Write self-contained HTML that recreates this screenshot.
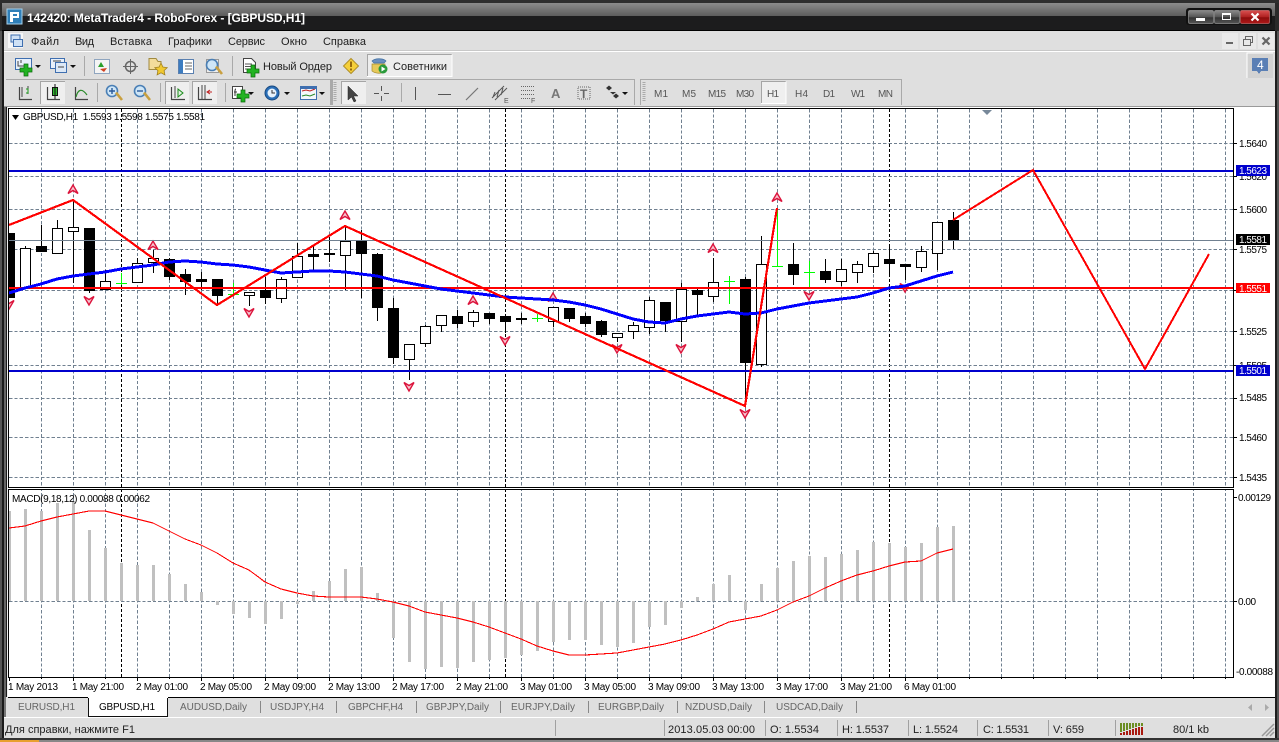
<!DOCTYPE html>
<html><head><meta charset="utf-8"><title>MetaTrader4</title>
<style>
html,body{margin:0;padding:0;background:#2a2a2a;width:1279px;height:742px;overflow:hidden}
svg{display:block}
text{font-family:"Liberation Sans",sans-serif;font-size:10px;fill:#000;white-space:pre}
.m{font-size:11px;fill:#1c1c1c}
.tb{font-size:11px;fill:#222}
.tf{font-size:10px;fill:#555}
.tab{font-size:10px;fill:#666}
.st{font-size:11px;fill:#222}
.ax{font-size:10px;fill:#000}
.c{shape-rendering:crispEdges}
</style></head><body>
<svg width="1279" height="742" viewBox="0 0 1279 742" xmlns="http://www.w3.org/2000/svg">
<defs>
<linearGradient id="tg" x1="0" y1="0" x2="0" y2="1"><stop offset="0" stop-color="#8c8c8c"/><stop offset="1" stop-color="#5c5c5c"/></linearGradient>
<linearGradient id="bg" x1="0" y1="0" x2="0" y2="1"><stop offset="0" stop-color="#8a8a8a"/><stop offset=".5" stop-color="#555"/><stop offset=".55" stop-color="#333"/><stop offset="1" stop-color="#555"/></linearGradient>
<linearGradient id="rg" x1="0" y1="0" x2="0" y2="1"><stop offset="0" stop-color="#d85050"/><stop offset=".5" stop-color="#b02020"/><stop offset=".55" stop-color="#8c0c0c"/><stop offset="1" stop-color="#b01818"/></linearGradient>
<clipPath id="cm"><rect x="9" y="109" width="1224" height="378"/></clipPath>
<clipPath id="cd"><rect x="9" y="490" width="1224" height="187"/></clipPath>
<g id="up"><path d="M-5 4.500L0-4 5 4.500 0 1.500Z" fill="#f6c4cf" stroke="#dc143c" stroke-width="1.400"/></g>
<g id="dn"><path d="M-5-4.500L0 4 5-4.500 0-1.500Z" fill="#f6c4cf" stroke="#dc143c" stroke-width="1.400"/></g>
<g id="plus"><path d="M-2-6h4v4h4v4h-4v4h-4v-4h-4v-4h4z" fill="#22b322" stroke="#0b6b0b" stroke-width=".7"/></g>
<path id="dd" d="M0 0h6l-3 3z" fill="#111"/>
<g id="mag"><circle cx="-2" cy="-2" r="5.500" fill="#cfe6f7" stroke="#4a7fb5" stroke-width="1.600"/><path d="M2-.5L8 7" stroke="#c9a040" stroke-width="2.600"/></g>
</defs>

<!-- window frame -->
<rect width="1279" height="742" fill="#2a2a2a"/>
<rect x="0" y="0" width="1279" height="3" fill="#2e2e2e"/>
<rect x="2" y="3" width="1273" height="13" fill="url(#tg)"/>
<rect x="2" y="16" width="1273" height="15" fill="#1c1c1d"/>
<rect x="2" y="30" width="1273" height="1" fill="#000"/>

<!-- title icon -->
<g class="c"><rect x="7" y="9" width="15" height="15" fill="#2f7fb8"/><rect x="7" y="9" width="15" height="15" fill="none" stroke="#a7d2ec"/><path d="M10 12h9v6h-6v4h-3zM13 14v2h4v-2z" fill="#fff" fill-rule="evenodd"/></g>
<text x="27" y="22" textLength="278" style="font-size:12px;font-weight:bold;fill:#fff">142420: MetaTrader4 - RoboForex - [GBPUSD,H1]</text>

<!-- window buttons -->
<rect x="1186" y="8" width="86" height="17" rx="3" fill="#111"/>
<rect x="1188.500" y="10.500" width="25" height="13" rx="1.500" fill="url(#bg)" stroke="#bbb" stroke-opacity=".5"/>
<rect x="1214.500" y="10.500" width="25" height="13" rx="1.500" fill="url(#bg)" stroke="#bbb" stroke-opacity=".5"/>
<rect x="1240.500" y="10.500" width="29" height="13" rx="1.500" fill="url(#rg)" stroke="#e88" stroke-opacity=".5"/>
<g class="c"><rect x="1196" y="18" width="9" height="3" fill="#fff"/><rect x="1222.500" y="13.500" width="8" height="6" fill="none" stroke="#fff" stroke-width="1.200"/><rect x="1222" y="13" width="9" height="2" fill="#fff"/></g>
<path d="M1251.500 13.500L1258.500 20.500M1258.500 13.500L1251.500 20.500" stroke="#fff" stroke-width="2.200"/>

<!-- client panel -->
<g class="c">
<rect x="4" y="31" width="1271" height="76" fill="#dfdfdf"/>
<rect x="4" y="51" width="1271" height="1" fill="#fff"/>
<rect x="4" y="50" width="1271" height="1" fill="#c8c8c8"/>
<rect x="4" y="106" width="1271" height="1" fill="#9a9a9a"/>
<rect x="0" y="107" width="2" height="635" fill="#555"/><rect x="2" y="107" width="2" height="631" fill="#1a1a1a"/><rect x="4" y="107" width="2" height="590" fill="#666"/><rect x="6" y="107" width="1" height="590" fill="#1a1a1a"/><rect x="7" y="107" width="1" height="590" fill="#eee"/>
<rect x="0" y="31" width="2" height="76" fill="#555"/><rect x="2" y="31" width="2" height="76" fill="#1a1a1a"/>
<rect x="1275" y="31" width="2" height="711" fill="#1e1e1e"/><rect x="1277" y="31" width="2" height="711" fill="#555"/>
</g>

<!-- menu -->
<g class="c"><rect x="8" y="33" width="15" height="15" fill="#f6f6f6"/><rect x="11" y="35" width="9" height="7" fill="#cfe1f5" stroke="#3f6fb0"/><rect x="13.500" y="39.500" width="9" height="7" fill="#cfe1f5" stroke="#3f6fb0"/></g>
<text class="m" x="31" y="45" textLength="28">Файл</text>
<text class="m" x="75" y="45" textLength="19">Вид</text>
<text class="m" x="110" y="45" textLength="42">Вставка</text>
<text class="m" x="168" y="45" textLength="44">Графики</text>
<text class="m" x="228" y="45" textLength="37">Сервис</text>
<text class="m" x="281" y="45" textLength="26">Окно</text>
<text class="m" x="323" y="45" textLength="43">Справка</text>
<!-- mdi buttons -->
<g class="c"><rect x="1222" y="33" width="16" height="16" fill="#e9e9e9"/><rect x="1240" y="33" width="16" height="16" fill="#e9e9e9"/><rect x="1258" y="33" width="16" height="16" fill="#e9e9e9"/>
<rect x="1226" y="42" width="7" height="2" fill="#666"/><rect x="1245.500" y="36.500" width="7" height="6" fill="none" stroke="#666"/><rect x="1243.500" y="39.500" width="7" height="6" fill="#e9e9e9" stroke="#666"/></g>
<path d="M1262.500 37.500L1269.500 44.500M1269.500 37.500L1262.500 44.500" stroke="#666" stroke-width="2.200"/>

<!-- notification -->
<g class="c"><rect x="1247" y="53" width="26" height="25" fill="#d2d2d2"/><path d="M1247 78V53h26" fill="none" stroke="#fff"/><path d="M1252 58h16v13h-7l-2 3-2-3h-5z" fill="#5a7fb5"/></g>
<text x="1257" y="69" style="font-size:12px;fill:#fff">4</text>

<!-- toolbar 1 icons -->
<g>
<rect x="15.500" y="58.500" width="16" height="11" fill="#e8f0fa" stroke="#3f6fb0"/><path d="M18 61v5h8M21 60v3" stroke="#444" fill="none"/><use href="#plus" x="26" y="70"/><use href="#dd" x="35" y="65"/>
<rect x="50.500" y="58.500" width="14" height="10" fill="#e8f0fa" stroke="#3f6fb0"/><rect x="55.500" y="62.500" width="11" height="10" fill="#dce8f6" stroke="#3f6fb0"/><path d="M53 61h8M58 67h6" stroke="#444"/><use href="#dd" x="70" y="65"/>
<path d="M84.500 56V76" stroke="#a9a9a9"/>
<rect x="94.500" y="59.500" width="15" height="14" fill="#f4f4f4" stroke="#8fa5bf"/><path d="M98 67l3-5 3 5z" fill="#2aa02a"/><path d="M100 69l4 3 3-4z" fill="#d04020"/>
<circle cx="130.500" cy="66.500" r="5" fill="none" stroke="#666" stroke-width="1.500"/><path d="M130.500 59V74M123 66.500H138" stroke="#666"/>
<path d="M149 58.500h7l2 3h3v8h-12z" fill="#f3dc9a" stroke="#a08a40"/><path d="M161 63l1.900 4 4.300.6-3.100 3 .8 4.300-3.900-2.100-3.900 2.100.8-4.300-3.100-3 4.300-.6z" fill="#f0c830" stroke="#a08020" stroke-width=".8"/>
<rect x="178.500" y="59.500" width="15" height="14" fill="#fff" stroke="#5a80b0"/><rect x="179" y="60" width="4" height="13" fill="#3c7cc0"/><path d="M185 63h7M185 66h7M185 69h7" stroke="#666"/>
<rect x="206.500" y="59.500" width="12" height="13" fill="#eee" stroke="#999"/><use href="#mag" x="214" y="67"/>
<path d="M232.500 56V76" stroke="#a9a9a9"/>
<path d="M243.500 58.500h8l4 4v10h-12z" fill="#fff" stroke="#444"/><path d="M245 64h7M245 66.500h7M245 69h5" stroke="#555"/><use href="#plus" x="253" y="71"/>
<text class="tb" x="263" y="70" textLength="69">Новый Ордер</text>
<path d="M351 58.500L358.500 66 351 73.500 343.500 66z" fill="#f5cf3a" stroke="#b0902a"/><path d="M351 61.500v5.500M351 68.500v2" stroke="#7a4a00" stroke-width="1.500"/>
<g class="c"><rect x="367" y="54" width="85" height="23" fill="#ededed"/><path d="M367.500 77V54.500H452" fill="none" stroke="#a5a5a5"/><path d="M452 54.500V76.500H367" fill="none" stroke="#fff"/></g>
<path d="M372 61c3-3 11-3 14 0l-2 2h-10z" fill="#6a8fc0" stroke="#3f6fa0" stroke-width=".7"/><path d="M372 64h13v7c-3 3-9 3-13 0z" fill="#e6c95a" stroke="#a58a30" stroke-width=".7"/><circle cx="383" cy="69" r="4.500" fill="#2a9a3a"/><path d="M381.500 66.500l4 2.500-4 2.500z" fill="#fff"/>
<text class="tb" x="393" y="70" textLength="54">Советники</text>
</g>

<!-- toolbar 2 frame -->
<g class="c">
<path d="M640.500 105V79.500H901.500V105" fill="none" stroke="#a9a9a9"/>
<path d="M6 79.500H634.500V105" fill="none" stroke="#a9a9a9"/>
<rect x="330" y="80" width="3" height="25" fill="#a9a9a9"/>
<path d="M644 82v20" stroke="#aaa" stroke-width="3" stroke-dasharray="1 1"/>
<path d="M335 82v20" stroke="#aaa" stroke-width="3" stroke-dasharray="1 1"/>
<path d="M97.500 83V102M160.500 83V102M225.500 83V102M401.500 83V102" stroke="#a9a9a9"/>
<rect x="40" y="81" width="25" height="23" fill="#efefef"/><path d="M40.500 104V81.500H65" fill="none" stroke="#a5a5a5"/>
<rect x="165" y="81" width="24" height="23" fill="#efefef"/><path d="M165.500 104V81.500H189" fill="none" stroke="#a5a5a5"/>
<rect x="192" y="81" width="25" height="23" fill="#efefef"/><path d="M192.500 104V81.500H217" fill="none" stroke="#a5a5a5"/>
<rect x="341" y="81" width="25" height="23" fill="#efefef"/><path d="M341.500 104V81.500H366" fill="none" stroke="#a5a5a5"/>
<rect x="761" y="81" width="25" height="23" fill="#efefef"/><path d="M761.500 104V81.500H786" fill="none" stroke="#a5a5a5"/><path d="M786 81.500V103.500H761" fill="none" stroke="#fff"/>
</g>
<!-- toolbar 2 icons -->
<g>
<path d="M19.500 87V99.500H32" fill="none" stroke="#444" stroke-width="1.200"/><path d="M22 87v10M28 86v8" stroke="#444"/><path d="M26 89h2v4h-2" stroke="#1a9a1a" fill="none"/>
<path d="M47.500 87V99.500H60" fill="none" stroke="#444" stroke-width="1.200"/><rect x="52.500" y="87.500" width="5" height="8" fill="#2fb52f" stroke="#111"/><path d="M55 84v15" stroke="#111"/>
<path d="M75.500 87V99.500H88" fill="none" stroke="#444" stroke-width="1.200"/><path d="M76 97c2-8 6-9 11-2" stroke="#2a8a2a" fill="none" stroke-width="1.200"/>
<use href="#mag" x="114" y="93"/><path d="M109 91h6M112 88v6" stroke="#2a5a9a" stroke-width="1.400"/>
<use href="#mag" x="142" y="93"/><path d="M137 91h6" stroke="#2a5a9a" stroke-width="1.400"/>
<path d="M171.500 87V99.500H185" fill="none" stroke="#444" stroke-width="1.200"/><path d="M178 89l5 4-5 4z" fill="#dff0df" stroke="#1a8a1a"/><path d="M175 86v12" stroke="#444"/>
<path d="M198.500 87V99.500H212" fill="none" stroke="#444" stroke-width="1.200"/><path d="M202 85v14M205 85v14" stroke="#444"/><path d="M212 92h-5M210 90l-3 2 3 2" stroke="#c02020" fill="none"/>
<rect x="232.500" y="86.500" width="10" height="12" fill="#fff" stroke="#444"/><path d="M236 89c-1 0-1 1-1 2v5M234 92h3" stroke="#333" fill="none"/><use href="#plus" x="243" y="96"/><use href="#dd" x="248" y="92"/>
<circle cx="272" cy="93" r="7" fill="#2a6fb8" stroke="#1a4a80"/><circle cx="272" cy="93" r="4.500" fill="#e8f2fb"/><path d="M272 90v3h3" stroke="#333" fill="none"/><use href="#dd" x="284" y="92"/>
<rect x="300.500" y="86.500" width="16" height="13" fill="#f4f7fb" stroke="#3f6fb0"/><path d="M302 91l4-1 4 1 5-2" stroke="#c02020" fill="none"/><path d="M302 96l4-1 4 1 5-2" stroke="#2a8a2a" fill="none"/><rect x="301" y="87" width="15" height="2" fill="#3f6fb0"/><use href="#dd" x="319" y="92"/>
<path d="M348 86v14l3.500-3 2.500 5 2-1-2.500-5h4.500z" fill="#444" stroke="#222" stroke-width=".5"/>
<path d="M381.500 86v5M381.500 96v5M374 93.500h5M384 93.500h5" stroke="#555"/>
<path d="M415.500 87V100" stroke="#555"/>
<path d="M438 94.500H451" stroke="#555"/>
<path d="M466 100L478 88" stroke="#777" stroke-width="1.200"/>
<path d="M492 98l12-12M495 100l12-12M495 92l-2 5M499 90l-2 7M503 88l-2 7" stroke="#555" fill="none"/><text x="504" y="103" style="font-size:7px;fill:#555">E</text>
<path d="M521 86.500h13M521 90.500h13M521 94.500h13M521 98.500h10" stroke="#666" stroke-dasharray="1 1"/><text x="531" y="103" style="font-size:7px;fill:#555">F</text>
<text x="551" y="98" style="font-size:13px;font-weight:bold;fill:#777">A</text>
<rect x="578" y="87" width="12" height="12" fill="none" stroke="#666" stroke-dasharray="1 1"/><text x="580" y="98" style="font-size:12px;font-weight:bold;fill:#666">T</text>
<path d="M606 88l3-2.500 3 2.500-3 2.500z M610 92l3 2.500 3-2.500zM613 96l3-2.500 3 2.500-3 2.500z" fill="#333"/><use href="#dd" x="622" y="92"/>
</g>
<text class="tf" x="654" y="97" textLength="14">M1</text>
<text class="tf" x="682" y="97" textLength="14">M5</text>
<text class="tf" x="708" y="97" textLength="18">M15</text>
<text class="tf" x="736" y="97" textLength="18">M30</text>
<text class="tf" x="767" y="97" textLength="12">H1</text>
<text class="tf" x="795" y="97" textLength="13">H4</text>
<text class="tf" x="823" y="97" textLength="12">D1</text>
<text class="tf" x="851" y="97" textLength="14">W1</text>
<text class="tf" x="878" y="97" textLength="15">MN</text>

<!-- chart background -->
<rect class="c" x="8" y="107" width="1267" height="590" fill="#fff"/>

<!-- grid -->
<g class="c" fill="none">
<path stroke="#708090" stroke-dasharray="3.330 2" d="M41.500 109V677M73.500 109V677M105.500 109V677M137.500 109V677M169.500 109V677M201.500 109V677M233.500 109V677M265.500 109V677M297.500 109V677M329.500 109V677M361.500 109V677M393.500 109V677M425.500 109V677M457.500 109V677M489.500 109V677M521.500 109V677M553.500 109V677M585.500 109V677M617.500 109V677M649.500 109V677M681.500 109V677M713.500 109V677M745.500 109V677M777.500 109V677M809.500 109V677M841.500 109V677M873.500 109V677M905.500 109V677M937.500 109V677M969.500 109V677M1001.500 109V677M1033.500 109V677M1065.500 109V677M1097.500 109V677M1129.500 109V677M1161.500 109V677M1193.500 109V677M1225.500 109V677"/>
<path stroke="#000" stroke-dasharray="3 2" d="M121.500 109V677M505.500 109V677M889.500 109V677"/>
<path stroke="#708090" stroke-dasharray="3.330 2" d="M9 143.500H1233M9 176.500H1233M9 209.500H1233M9 249.500H1233M9 290.500H1233M9 331.500H1233M9 365.500H1233M9 398.500H1233M9 437.500H1233M9 477.500H1233M9 601.500H1233"/>
</g>

<!-- macd histogram -->
<g class="c" clip-path="url(#cd)">
<path stroke="#c0c0c0" stroke-width="3" fill="none" d="M9.500 511V601M25.500 509V601M41.500 511V601M57.500 503V601M73.500 501V601M89.500 530V601M105.500 548V601M121.500 563V601M137.500 565V601M153.500 565V601M169.500 574V601M185.500 584V601M201.500 592V601M217.500 601V605M233.500 601V614M249.500 601V618M265.500 601V624M281.500 601V619M297.500 601V604M313.500 591V601M329.500 581V601M345.500 569V601M361.500 567V601M377.500 593V601M393.500 601V638M409.500 601V662M425.500 601V669M441.500 601V667M457.500 601V668M473.500 601V662M489.500 601V660M505.500 601V658M521.500 601V655M537.500 601V651M553.500 601V642M569.500 601V640M585.500 601V640M601.500 601V645M617.500 601V647M633.500 601V643M649.500 601V627M665.500 601V625M681.500 601V608M697.500 597V601M713.500 584V601M729.500 575V601M745.500 601V610M761.500 584V601M777.500 568V601M793.500 561V601M809.500 556V601M825.500 557V601M841.500 554V601M857.500 550V601M873.500 542V601M889.500 543V601M905.500 547V601M921.500 543V601M937.500 527V601M953.500 526V601"/>
<path fill="none" stroke="#ff0000" stroke-width="1.100" d="M9 528L25 526 41 521 57 517 73 514 89 511 105 511 121 515 137 519 153 523 169 531 185 539 201 545 217 553 233 563 249 570 265 582 281 589 297 593 313 596 329 597 345 597 361 597 377 599 393 602 409 606 425 612 441 615 457 618 473 622 489 627 505 633 521 639 537 646 553 651 569 655 585 655 601 654 617 653 633 650 649 647 665 644 681 640 697 635 713 629 729 622 745 619 761 616 777 610 793 602 809 596 825 588 841 581 857 575 873 571 889 566 905 562 921 561 937 553 953 549"/>
</g>

<!-- candles -->
<g clip-path="url(#cm)">
<g class="c">
<path fill="none" stroke="#000" d="M25.500 246V288M41.500 225V252M57.500 220V253M73.500 200V283M89.500 228V293M105.500 270V290M137.500 258V282M153.500 250V273M169.500 258V280M185.500 269V295M201.500 272V290M217.500 279V305M249.500 292V306M265.500 277V304M281.500 277V303M297.500 243V277M313.500 245V272M329.500 237V262M345.500 225V290M361.500 230V298M377.500 253V321M393.500 298V364M409.500 344V380M425.500 325V347M441.500 315V332M457.500 310V328M473.500 310V327M489.500 313V324M505.500 316V333M521.500 313V324M553.500 307V327M569.500 308V322M585.500 313V327M601.500 320V337M617.500 333V342M633.500 322V339M649.500 297V334M665.500 302V332M681.500 283V342M697.500 288V317M713.500 258V302M745.500 277V407M761.500 236V367M793.500 243V285M825.500 259V283M841.500 259V286M857.500 261V283M873.500 251V273M889.500 247V275M905.500 264V280M921.500 246V272M937.500 222V270M953.500 212V249"/>
<path fill="none" stroke="#00ff00" d="M116 283.500H127M121.500 273V285M228 294.500H239M233.500 283V296M532 318.500H543M537.500 314V322M724 281.500H735M729.500 276V304M772 266.500H783M777.500 208V267M804 272.500H815M809.500 261V287"/>
<path fill="#fff" stroke="#000" d="M20.500 248.500h10v40h-10zM52.500 228.500h10v25h-10zM68.500 227.500h10v4h-10zM100.500 281.500h10v8h-10zM132.500 263.500h10v19h-10zM148.500 258.500h10v4h-10zM244.500 292.500h10v3h-10zM276.500 279.500h10v19h-10zM292.500 256.500h10v21h-10zM340.500 241.500h10v14h-10zM404.500 344.500h10v15h-10zM420.500 326.500h10v17h-10zM436.500 315.500h10v10h-10zM468.500 312.500h10v9h-10zM548.500 307.500h10v14h-10zM612.500 333.500h10v4h-10zM628.500 325.500h10v6h-10zM644.500 300.500h10v27h-10zM676.500 289.500h10v32h-10zM708.500 282.500h10v14h-10zM756.500 264.500h10v100h-10zM836.500 269.500h10v12h-10zM852.500 264.500h10v8h-10zM868.500 253.500h10v13h-10zM916.500 251.500h10v16h-10zM932.500 222.500h10v31h-10z"/>
<path fill="#000" d="M9 233h6v65h-6zM36 246h11v6h-11zM84 228h11v63h-11zM164 259h11v18h-11zM180 274h11v8h-11zM196 279h11v3h-11zM212 279h11v17h-11zM260 290h11v8h-11zM308 254h11v3h-11zM324 253h11v2h-11zM356 240h11v14h-11zM372 254h11v54h-11zM388 308h11v50h-11zM452 316h11v8h-11zM484 313h11v6h-11zM500 316h11v6h-11zM516 318h11v2h-11zM564 308h11v11h-11zM580 316h11v8h-11zM596 321h11v14h-11zM660 302h11v19h-11zM692 290h11v5h-11zM740 279h11v84h-11zM788 264h11v11h-11zM820 271h11v9h-11zM884 259h11v5h-11zM900 264h11v3h-11zM948 220h11v21h-11z"/>
</g>
<!-- fractals -->
<use href="#up" x="73" y="189"/><use href="#up" x="153" y="245"/><use href="#up" x="345" y="215"/><use href="#up" x="473" y="300"/><use href="#up" x="553" y="297"/><use href="#up" x="713" y="248"/><use href="#up" x="777" y="197"/>
<use href="#dn" x="9" y="305"/><use href="#dn" x="89" y="301"/><use href="#dn" x="249" y="313"/><use href="#dn" x="409" y="387"/><use href="#dn" x="505" y="341"/><use href="#dn" x="617" y="349"/><use href="#dn" x="681" y="349"/><use href="#dn" x="745" y="414"/><use href="#dn" x="809" y="296"/><use href="#dn" x="905" y="288"/>
<g class="c">
<path stroke="#708090" d="M9 240.500H1233"/>
<path stroke="#0000cd" stroke-width="2" d="M9 171H1233M9 371H1233"/>
<path stroke="#ff0000" stroke-width="2" d="M9 288H1233"/>
<!-- MA -->
<path fill="none" stroke="#0000ff" stroke-width="3" stroke-linejoin="round" d="M9 293L25 288 41 284 57 279 73 276 89 274 105 272 121 269 137 267 153 265 169 262 185 261 201 262 217 264 233 265 249 267 265 270 281 273 297 272 313 271 329 271 345 272 361 274 377 276 393 280 409 283 425 286 441 289 457 291 473 293 489 295 505 297 521 298 537 299 553 300 569 302 585 305 601 309 617 314 633 319 649 322 665 323 681 319 697 316 713 314 729 312 745 314 761 313 777 309 793 306 809 303 825 301 841 299 857 297 873 293 889 288 905 286 921 281 937 276 953 272"/>
<!-- zigzag -->
<path fill="none" stroke="#ff0000" stroke-width="2.200" stroke-linejoin="miter" d="M9 225L73 200 217 305 345 226 745 406 777 208"/>
<path fill="none" stroke="#ff0000" stroke-width="2" stroke-linejoin="miter" d="M953 220L1033 170 1145 369 1209 254"/>
</g>
</g>

<!-- borders -->
<g class="c">
<rect x="8" y="108" width="1226" height="1" fill="#000"/>
<rect x="8" y="108" width="1" height="570" fill="#000"/>
<rect x="1233" y="108" width="1" height="570" fill="#000"/>
<rect x="8" y="488" width="1226" height="1" fill="#fff"/>
<rect x="8" y="487" width="1226" height="1" fill="#000"/>
<rect x="8" y="489" width="1226" height="1" fill="#000"/>
<rect x="8" y="677" width="1226" height="1" fill="#000"/>
<path stroke="#000" d="M9.500 678v3M73.500 678v3M137.500 678v3M201.500 678v3M265.500 678v3M329.500 678v3M393.500 678v3M457.500 678v3M521.500 678v3M585.500 678v3M649.500 678v3M713.500 678v3M777.500 678v3M841.500 678v3M905.500 678v3"/>
<path stroke="#000" d="M41.500 678v1M105.500 678v1M169.500 678v1M233.500 678v1M297.500 678v1M361.500 678v1M425.500 678v1M489.500 678v1M553.500 678v1M617.500 678v1M681.500 678v1M745.500 678v1M809.500 678v1M873.500 678v1M937.500 678v1M969.500 678v1M1001.500 678v1M1033.500 678v1M1065.500 678v1M1097.500 678v1M1129.500 678v1M1161.500 678v1M1193.500 678v1M1225.500 678v1"/>
<path stroke="#000" d="M1234 143.500h3M1234 176.500h3M1234 209.500h3M1234 249.500h3M1234 290.500h3M1234 331.500h3M1234 365.500h3M1234 398.500h3M1234 437.500h3M1234 477.500h3M1234 497.500h3M1234 601.500h3"/>
</g>
<path d="M982 110h10l-5 5z" fill="#778899"/>
<path d="M12 115h7l-3.500 5z" fill="#000"/>
<text x="23" y="120" textLength="182">GBPUSD,H1  1.5593 1.5598 1.5575 1.5581</text>
<text x="12" y="502" textLength="138">MACD(9,18,12) 0.00088 0.00062</text>

<!-- right axis -->
<text class="ax" x="1239" y="147" textLength="28">1.5640</text>
<text class="ax" x="1239" y="180" textLength="28">1.5620</text>
<text class="ax" x="1239" y="213" textLength="28">1.5600</text>
<text class="ax" x="1239" y="253" textLength="28">1.5575</text>
<text class="ax" x="1239" y="335" textLength="28">1.5525</text>
<text class="ax" x="1239" y="369" textLength="28">1.5505</text>
<text class="ax" x="1239" y="401" textLength="28">1.5485</text>
<text class="ax" x="1239" y="441" textLength="28">1.5460</text>
<text class="ax" x="1239" y="481" textLength="28">1.5435</text>
<text class="ax" x="1238" y="501" textLength="33">0.00129</text>
<text class="ax" x="1238" y="605" textLength="18">0.00</text>
<text class="ax" x="1236" y="675" textLength="37">-0.00088</text>
<g class="c">
<rect x="1236" y="165" width="34" height="11" fill="#0000cd"/>
<rect x="1236" y="234" width="34" height="11" fill="#000"/>
<rect x="1236" y="283" width="34" height="10" fill="#ff0000"/>
<rect x="1236" y="365" width="34" height="11" fill="#0000cd"/>
</g>
<text class="ax" x="1239" y="174" textLength="28" style="fill:#fff">1.5623</text>
<text class="ax" x="1239" y="243" textLength="28" style="fill:#fff">1.5581</text>
<text class="ax" x="1239" y="292" textLength="28" style="fill:#fff">1.5551</text>
<text class="ax" x="1239" y="374" textLength="28" style="fill:#fff">1.5501</text>

<!-- time axis -->
<text class="ax" x="8" y="690" textLength="50">1 May 2013</text>
<text class="ax" x="72" y="690" textLength="52">1 May 21:00</text>
<text class="ax" x="136" y="690" textLength="52">2 May 01:00</text>
<text class="ax" x="200" y="690" textLength="52">2 May 05:00</text>
<text class="ax" x="264" y="690" textLength="52">2 May 09:00</text>
<text class="ax" x="328" y="690" textLength="52">2 May 13:00</text>
<text class="ax" x="392" y="690" textLength="52">2 May 17:00</text>
<text class="ax" x="456" y="690" textLength="52">2 May 21:00</text>
<text class="ax" x="520" y="690" textLength="52">3 May 01:00</text>
<text class="ax" x="584" y="690" textLength="52">3 May 05:00</text>
<text class="ax" x="648" y="690" textLength="52">3 May 09:00</text>
<text class="ax" x="712" y="690" textLength="52">3 May 13:00</text>
<text class="ax" x="776" y="690" textLength="52">3 May 17:00</text>
<text class="ax" x="840" y="690" textLength="52">3 May 21:00</text>
<text class="ax" x="904" y="690" textLength="52">6 May 01:00</text>

<!-- tabs -->
<g class="c">
<rect x="4" y="697" width="1271" height="41" fill="#dfdfdf"/>
<rect x="8" y="697" width="1267" height="1" fill="#000"/>
<rect x="4" y="717" width="1271" height="1" fill="#fff"/>
<rect x="4" y="697" width="2" height="20" fill="#777"/>
<rect x="88" y="697" width="80" height="20" fill="#fff"/>
<path d="M88.500 698V717M167.500 698V717M88 716.500H168" stroke="#111" fill="none"/>
<path d="M260.500 701V713M336.500 701V713M416.500 701V713M500.500 701V713M588.500 701V713M677.500 701V713M764.500 701V713M856.500 701V713" stroke="#888"/>
<path d="M555.500 720V736M664.500 720V736M765.500 720V736M837.500 720V736M908.500 720V736M977.500 720V736M1048.500 720V736M1115.500 720V736" stroke="#a0a0a0"/>
<rect x="0" y="738" width="1279" height="4" fill="#333"/>
<rect x="0" y="740" width="39" height="2" fill="#e8a030"/>
<rect x="39" y="740" width="1240" height="2" fill="#888"/>
</g>
<text class="tab" x="18" y="710" textLength="57">EURUSD,H1</text>
<text class="tab" x="99" y="710" textLength="56" style="fill:#000">GBPUSD,H1</text>
<text class="tab" x="180" y="710" textLength="67">AUDUSD,Daily</text>
<text class="tab" x="270" y="710" textLength="54">USDJPY,H4</text>
<text class="tab" x="348" y="710" textLength="55">GBPCHF,H4</text>
<text class="tab" x="426" y="710" textLength="63">GBPJPY,Daily</text>
<text class="tab" x="511" y="710" textLength="64">EURJPY,Daily</text>
<text class="tab" x="598" y="710" textLength="66">EURGBP,Daily</text>
<text class="tab" x="685" y="710" textLength="67">NZDUSD,Daily</text>
<text class="tab" x="776" y="710" textLength="67">USDCAD,Daily</text>
<path d="M1252 704l-4 3.500 4 3.500zM1265 704l4 3.500-4 3.500z" fill="#aaa"/>

<!-- status -->
<text class="st" x="5" y="733" textLength="130">Для справки, нажмите F1</text>
<text class="st" x="668" y="733" textLength="87">2013.05.03 00:00</text>
<text class="st" x="770" y="733" textLength="49">O: 1.5534</text>
<text class="st" x="842" y="733" textLength="47">H: 1.5537</text>
<text class="st" x="913" y="733" textLength="45">L: 1.5524</text>
<text class="st" x="983" y="733" textLength="46">C: 1.5531</text>
<text class="st" x="1053" y="733" textLength="31">V: 659</text>
<text class="st" x="1173" y="733" textLength="36">80/1 kb</text>
<g class="c">
<path stroke="#6b8e23" stroke-width="2" d="M1121 723v9M1124 723v8M1127 723v7M1130 723v6M1133 723v5M1136 723v4M1139 723v3M1142 723v3"/>
<path stroke="#aa1a10" stroke-width="2" d="M1121 733v2M1124 732v3M1127 731v4M1130 730v5M1133 729v6M1136 728v7M1139 727v8M1142 727v8"/>
</g>
<path d="M1274 724L1262 736M1274 728L1266 736M1274 732L1270 736" stroke="#999" stroke-width="1.500"/>
</svg>
</body></html>
